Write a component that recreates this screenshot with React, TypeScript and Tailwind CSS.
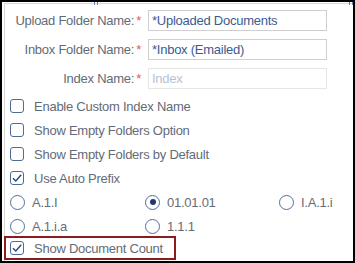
import React from "react";

const font = { fontFamily: '"Liberation Sans", Arial, sans-serif' };
const txt = "text-[13px] leading-none tracking-[-0.25px] whitespace-nowrap";

function Label({ text }: { text: string }) {
  return (
    <div className={`w-[136px] shrink-0 text-right ${txt} text-[#636b77]`}>
      {text}
      <span className="ml-[2px] text-[#e05a5a]">*</span>
    </div>
  );
}

function Checkbox({ checked }: { checked?: boolean }) {
  return (
    <div className="w-[14px] h-[14px] shrink-0 rounded-[3px] border-[1.5px] border-[#4f6b96] bg-white flex items-center justify-center">
      {checked && (
        <svg width="12" height="12" viewBox="0 0 12 12">
          <path d="M2 6.2 L4.8 9 L10.2 2.8" fill="none" stroke="#2c4677" strokeWidth="1.4" />
        </svg>
      )}
    </div>
  );
}

function CheckRow({ text, checked }: { text: string; checked?: boolean }) {
  return (
    <div className="h-[24px] flex items-center pl-[5px]">
      <Checkbox checked={checked} />
      <span className={`ml-[10px] ${txt} text-[#636b77]`}>{text}</span>
    </div>
  );
}

function Radio({ text, checked }: { text: string; checked?: boolean }) {
  return (
    <div className="flex items-center">
      <div className="w-[15px] h-[15px] shrink-0 rounded-full border-[1.5px] border-[#4f6f9f] bg-white flex items-center justify-center">
        {checked && <div className="w-[6px] h-[6px] rounded-full bg-[#1f3a6e]" />}
      </div>
      <span className={`ml-[7px] ${txt} text-[#666c74]`}>{text}</span>
    </div>
  );
}

export default function App() {
  return (
    <div style={font} className="relative w-[355px] h-[263px] border-2 border-black bg-white overflow-hidden">
      <div className="absolute left-[92px] top-0 w-[1px] h-[3px] bg-[#6a85b0]" />
      <div className="absolute left-[95px] top-0 w-[1px] h-[3px] bg-[#6a85b0]" />
      <div className="absolute left-[347px] top-0 w-[1px] h-[3px] bg-[#6a85b0]" />
      <div className="absolute left-[350px] top-0 w-[1px] h-[3px] bg-[#6a85b0]" />
      <div className="ml-[2px] mt-[1px] h-[258px] border-t border-l border-[#d6d6d6] pt-[6px]">
        <div className="flex flex-col gap-[8px]">
          <div className="flex items-center">
            <Label text="Upload Folder Name:" />
            <div className={`ml-[7px] w-[179px] h-[21px] border border-[#cfcfcf] flex items-center pl-[3px] ${txt} text-[#3b5b8f]`}>
              *Uploaded Documents
            </div>
          </div>
          <div className="flex items-center">
            <Label text="Inbox Folder Name:" />
            <div className={`ml-[7px] w-[179px] h-[21px] border border-[#cfcfcf] flex items-center pl-[3px] ${txt} text-[#3b5b8f]`}>
              *Inbox (Emailed)
            </div>
          </div>
          <div className="flex items-center">
            <Label text="Index Name:" />
            <div className={`ml-[7px] w-[179px] h-[21px] border border-[#e6e6e6] flex items-center pl-[3px] ${txt} text-[#b6c2d4]`}>
              Index
            </div>
          </div>
        </div>
        <div className="mt-[5px] flex flex-col">
          <CheckRow text="Enable Custom Index Name" />
          <CheckRow text="Show Empty Folders Option" />
          <CheckRow text="Show Empty Folders by Default" />
          <CheckRow text="Use Auto Prefix" checked />
          <div className="h-[24px] pl-[5px] grid grid-cols-[135px_134px_1fr] items-center">
            <Radio text="A.1.I" />
            <Radio text="01.01.01" checked />
            <Radio text="I.A.1.i" />
          </div>
          <div className="h-[24px] pl-[5px] grid grid-cols-[135px_134px_1fr] items-center">
            <Radio text="A.1.i.a" />
            <Radio text="1.1.1" />
          </div>
          <div className="-mt-[2px] -ml-[1px] w-[172px] h-[24px] border-2 border-[#8b1c1c] flex items-center pl-[4px]">
            <Checkbox checked />
            <span className={`ml-[10px] ${txt} text-[#636b77]`}>Show Document Count</span>
          </div>
        </div>
      </div>
    </div>
  );
}
